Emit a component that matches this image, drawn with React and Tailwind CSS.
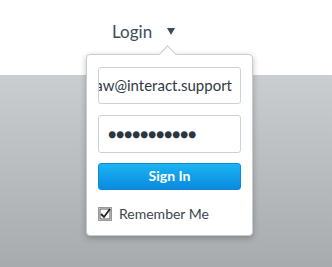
import React from "react";

export default function App() {
  return (
    <div
      className="relative w-[332px] h-[267px] overflow-hidden bg-white"
      style={{ fontFamily: "Lato, 'Open Sans', sans-serif" }}
    >
      {/* header */}
      <div className="h-[75px] bg-white flex items-start pl-[112px] pt-[20px]">
        <span className="text-[17px] leading-[24px] text-[#3c4d5a]">Login</span>
        <span className="ml-[15px] mt-[8px] w-0 h-0 border-l-[4px] border-r-[4px] border-t-[7px] border-l-transparent border-r-transparent border-t-[#3c4d5a]" />
      </div>
      <div className="h-[192px] bg-gradient-to-b from-[#cbced0] to-[#a7abad]" />

      {/* dropdown */}
      <div className="absolute left-[86px] top-[54px] w-[167px] h-[182px] bg-white border border-[#c9cccf] rounded-[4px] shadow-[0_2px_6px_rgba(0,0,0,0.25)] px-[11px] pt-[12px]">
        <div className="absolute left-[74px] top-[-7px] w-[13px] h-[13px] bg-white border-l border-t border-[#c9cccf] rotate-45" />
        <div className="relative h-[37px] border border-[#cfd2d4] rounded-[3px] flex items-center justify-end overflow-hidden pr-[8px]">
          <span className="text-[15px] text-[#2f3a44] whitespace-nowrap">aw@interact.support</span>
        </div>
        <div className="mt-[11px] h-[38px] border border-[#cfd2d4] rounded-[3px] flex items-center pl-[9px]">
          <span className="text-[14px] tracking-[-0.4px] text-[#2b3640] leading-none">●●●●●●●●●●●</span>
        </div>
        <div className="mt-[10px] h-[27px] rounded-[3px] bg-gradient-to-b from-[#1cb4f2] to-[#0a8ae0] border border-[#0f86d6] flex items-center justify-center pb-[3px]">
          <span className="text-[14px] font-bold text-white">Sign In</span>
        </div>
        <div className="mt-[13px] flex items-center">
          <svg width="14" height="14" viewBox="0 0 14 14">
            <rect x="0.5" y="0.5" width="13" height="13" fill="white" stroke="#333" strokeDasharray="1 1" />
            <rect x="2" y="2" width="10" height="10" fill="none" stroke="#555" />
            <path d="M3 7 L6 10 L12 2" fill="none" stroke="#222" strokeWidth="1.8" />
          </svg>
          <span className="ml-[7px] text-[14px] text-[#3d4650]">Remember Me</span>
        </div>
      </div>
    </div>
  );
}
